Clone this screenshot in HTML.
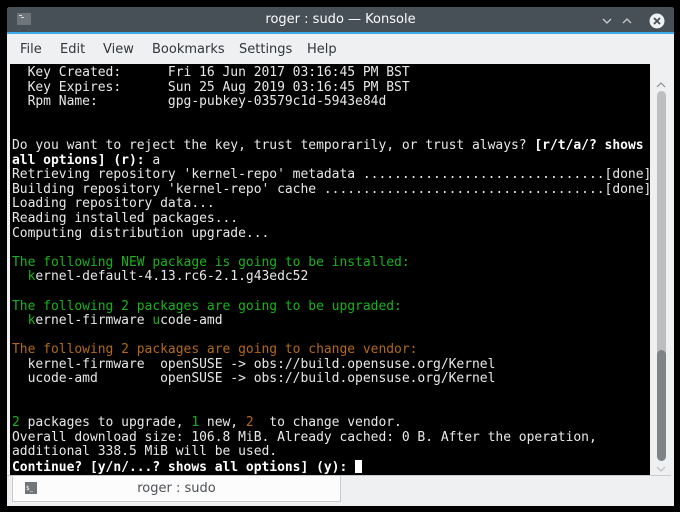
<!DOCTYPE html>
<html><head><style>
*{margin:0;padding:0;box-sizing:border-box}
body{width:680px;height:512px;background:#000;position:relative;overflow:hidden;font-family:"DejaVu Sans","Liberation Sans",sans-serif}
.win{position:absolute;left:7px;top:7px;width:667px;height:499px;background:#eff0f1;border-radius:3px 3px 0 0;overflow:hidden}
.title{position:absolute;left:0;top:0;width:100%;height:27px;background:#475057;border-bottom:2px solid #3daee9}
.title .t{position:absolute;left:0;right:0;top:5px;text-align:center;color:#fcfcfc;font-size:13px}
.menu{position:absolute;top:35px;left:0;font-size:13px;color:#31363b}
.menu span{position:absolute;top:0}
.term{position:absolute;left:3px;top:57px;width:640px;height:411px;background:#000;padding-top:2px;padding-left:2px;overflow:hidden}
.term pre{font-family:"DejaVu Sans Mono","Liberation Mono",monospace;font-size:13px;letter-spacing:-0.03px;line-height:14.6px;color:#e8e8e8;white-space:pre}
.g{color:#18b218}.o{color:#b26818}b{font-weight:bold;color:#fff}
.cur{display:inline-block;width:7px;height:13px;background:#fff;vertical-align:-2px}
.tab{position:absolute;left:5px;top:469px;width:329px;height:26px;background:#fcfcfc;border:1px solid #c8cacc;border-top:none}
</style></head><body>
<div class="win">
 <div class="title">
  <svg style="position:absolute;left:10px;top:6px" width="14" height="12"><rect width="14" height="12" fill="#6e757b"/><rect x="2" y="2" width="3" height="1" fill="#ddd"/><rect x="4" y="4" width="3" height="1" fill="#ddd"/></svg>
  <div class="t">roger : sudo — Konsole</div>
  <svg style="position:absolute;left:593px;top:6px" width="70" height="16" fill="none" stroke="#c8ccd0" stroke-width="1.3">
   <path d="M3 6l4 4 4-4"/><path d="M23 10l4-4 4 4"/>
   <circle cx="57" cy="8" r="7.5" fill="#eff0f1" stroke="none"/>
   <path d="M54 5l6 6M60 5l-6 6" stroke="#475057" stroke-width="1.8"/>
  </svg>
 </div>
 <div class="menu"><span style="left:13px">File</span><span style="left:53px">Edit</span><span style="left:96px">View</span><span style="left:145px">Bookmarks</span><span style="left:232px">Settings</span><span style="left:300px">Help</span></div>
 <div class="term"><pre>  Key Created:      Fri 16 Jun 2017 03:16:45 PM BST
  Key Expires:      Sun 25 Aug 2019 03:16:45 PM BST
  Rpm Name:         gpg-pubkey-03579c1d-5943e84d


Do you want to reject the key, trust temporarily, or trust always? <b>[r/t/a/? shows</b>
<b>all options] (r):</b> a
Retrieving repository 'kernel-repo' metadata ...............................[done]
Building repository 'kernel-repo' cache ....................................[done]
Loading repository data...
Reading installed packages...
Computing distribution upgrade...

<span class="g">The following NEW package is going to be installed:</span>
  <span class="g">k</span>ernel-default-4.13.rc6-2.1.g43edc52

<span class="g">The following 2 packages are going to be upgraded:</span>
  <span class="g">k</span>ernel-firmware <span class="g">u</span>code-amd

<span class="o">The following 2 packages are going to change vendor:</span>
  kernel-firmware  openSUSE -&gt; obs://build.opensuse.org/Kernel
  ucode-amd        openSUSE -&gt; obs://build.opensuse.org/Kernel


<span class="g">2</span> packages to upgrade, <span class="g">1</span> new, <span class="o">2</span>  to change vendor.
Overall download size: 106.8 MiB. Already cached: 0 B. After the operation,
additional 338.5 MiB will be used.
<b>Continue? [y/n/...? shows all options] (y):</b> <span class="cur"></span></pre></div>
 <svg style="position:absolute;left:645px;top:57px" width="20" height="412">
  <path d="M5 23l4-4 4 4" fill="none" stroke="#8a8e92" stroke-width="1.2"/>
  <rect x="5" y="27" width="9" height="290" rx="4.5" fill="#bcbec0"/>
  <rect x="5" y="286" width="9" height="111" rx="4.5" fill="#7f8388"/>
  <path d="M5 403l4 4 4-4" fill="none" stroke="#b8bcc0" stroke-width="1.2"/>
 </svg>
 <div style="position:absolute;left:0;top:468px;width:664px;height:1px;background:#c8cacc"></div>
 <div class="tab">
  <svg style="position:absolute;left:12px;top:6px" width="12" height="12"><rect width="12" height="12" fill="#6e757b"/><text x="1" y="8" font-size="6" fill="#fff" font-family="DejaVu Sans">$_</text></svg>
  <div style="position:absolute;left:0;right:0;top:5px;text-align:center;font-size:13px;color:#4d5257">roger : sudo</div>
 </div>
</div>
</body></html>
